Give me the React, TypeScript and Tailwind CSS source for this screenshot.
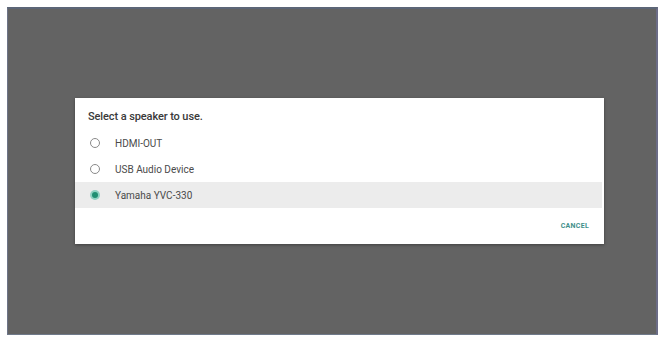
import React from "react";

const items = ["HDMI-OUT", "USB Audio Device", "Yamaha YVC-330"];

export default function App() {
  const selected = 2;
  return (
    <div className="w-[660px] h-[337px] bg-white pt-[7px] pl-[7px] pr-[2px] pb-[2px] flex" style={{ fontFamily: "Roboto, 'Liberation Sans', sans-serif" }}>
      <div className="flex-1 bg-[#636363] border-t-2 border-t-[#5c6677] border-l border-l-[#6d7487] border-r-2 border-r-[#6b6c86] border-b border-b-[#707a8a] pl-[67px] pt-[89px]">
        <div className="w-[529px] h-[146px] bg-white shadow-[0_1px_3px_rgba(0,0,0,0.35)] flex flex-col">
          <div className="pl-[13px] pt-[12px] h-[32px] text-[11px] leading-[14px] text-[#3a3a3a] font-medium tracking-[-0.1px]">
            Select a speaker to use.
          </div>
          {items.map((label, i) => (
            <div
              key={label}
              className={`h-[26px] flex items-center pl-[15px] mr-[2px] ${i === selected ? "bg-[#ececec]" : ""}`}
            >
              {i === selected ? (
                <span className="w-[10px] h-[10px] rounded-full bg-[#8fd1c2] flex items-center justify-center">
                  <span className="w-[6px] h-[6px] rounded-full bg-[#1f8f72]" />
                </span>
              ) : (
                <span className="w-[10px] h-[10px] rounded-full border-[1.5px] border-[#8a8a8a]" />
              )}
              <span className="ml-[15px] text-[10px] text-[#4a4a4a] pt-[1px]">{label}</span>
            </div>
          ))}
          <div className="flex-1 flex items-center justify-end pr-[15px]">
            <span className="text-[7px] font-bold tracking-[0.3px] text-[#3f8f8a]">CANCEL</span>
          </div>
        </div>
      </div>
    </div>
  );
}
